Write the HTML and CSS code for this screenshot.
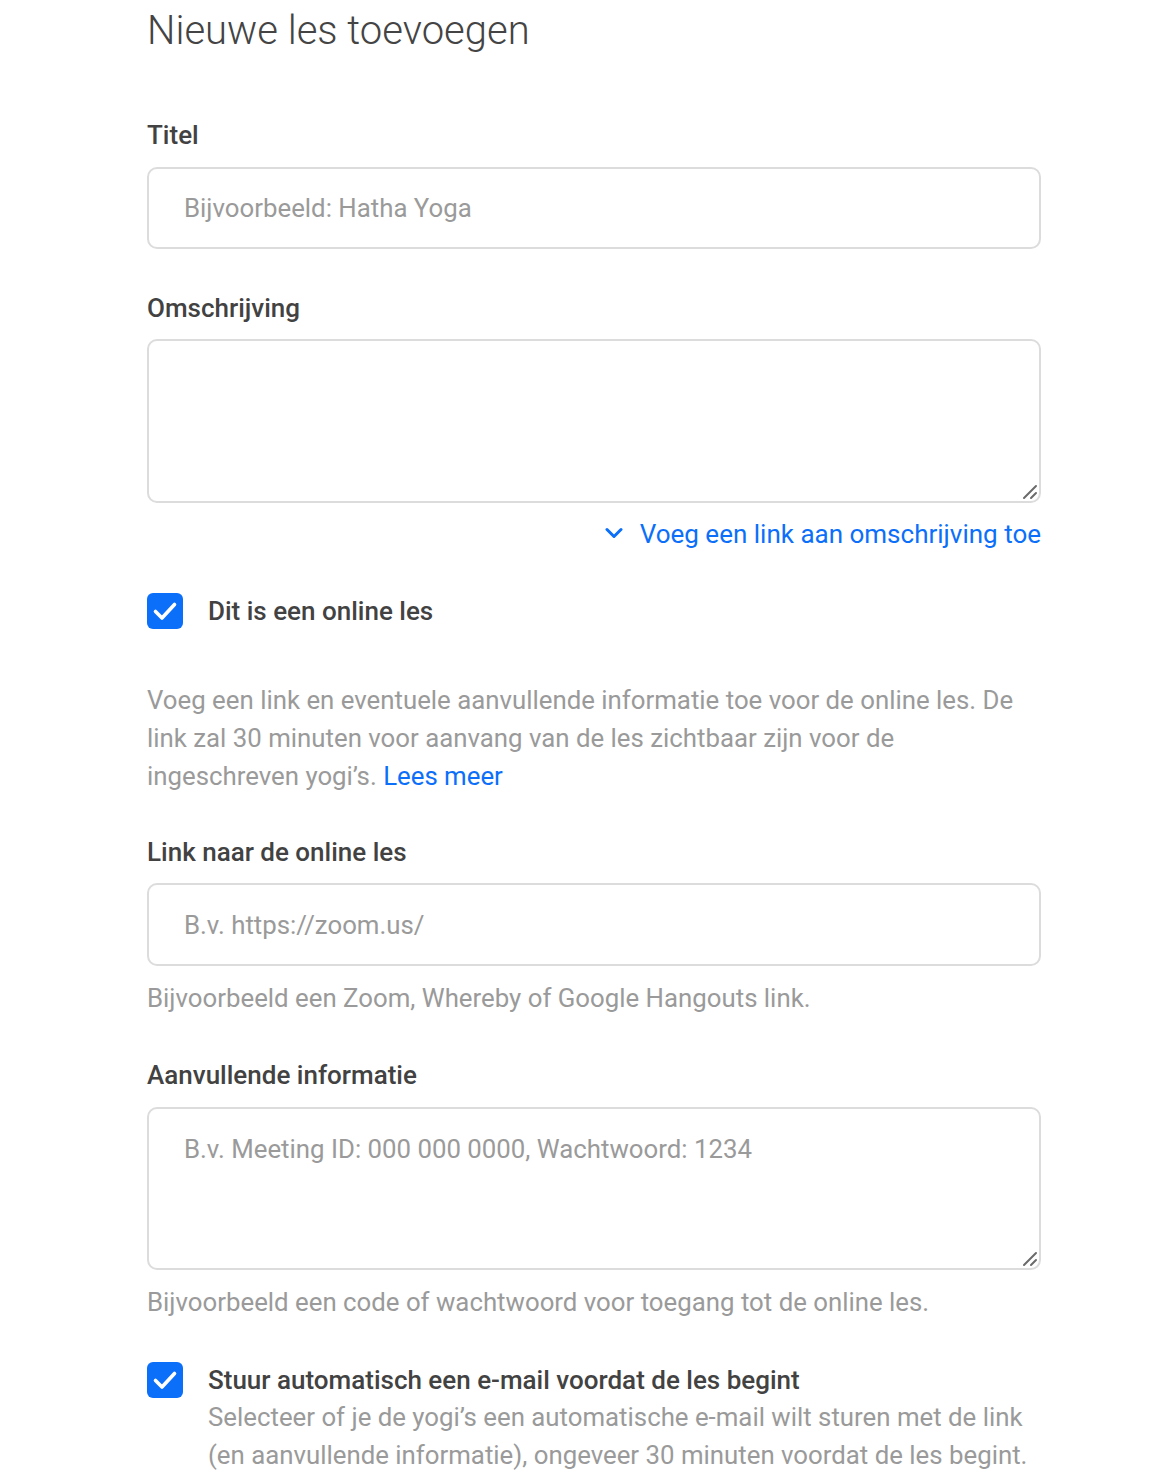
FILE: index.html
```html
<!DOCTYPE html>
<html lang="nl">
<head>
<meta charset="utf-8">
<title>Nieuwe les toevoegen</title>
<link rel="stylesheet" href="styles.css">
</head>
<body>
<main class="page">
  <h1 class="page-title">Nieuwe les toevoegen</h1>

  <div class="field field-first">
    <label class="field-label" for="titel">Titel</label>
    <input class="text-input" id="titel" type="text" placeholder="Bijvoorbeeld: Hatha Yoga">
  </div>

  <div class="field field-desc">
    <label class="field-label" for="omschrijving">Omschrijving</label>
    <div class="area-wrap">
      <textarea class="text-area" id="omschrijving"></textarea>
      <svg class="grip" width="16" height="16" viewBox="0 0 16 16" aria-hidden="true"><path d="M2 14 L14 2 M9 14 L14 9" fill="none" stroke="#6b6b6b" stroke-width="2" stroke-linecap="round"/></svg>
    </div>
    <div class="link-row">
      <a class="toggle-link" href="#">
        <svg class="chevron" width="18" height="12" viewBox="0 0 18 12" aria-hidden="true"><path d="M2 2.5 L9 9.5 L16 2.5" fill="none" stroke="currentColor" stroke-width="3" stroke-linecap="round" stroke-linejoin="round"/></svg>
        <span>Voeg een link aan omschrijving toe</span>
      </a>
    </div>
  </div>

  <div class="check-row check-online">
    <span class="checkbox"><svg width="36" height="36" viewBox="0 0 36 36" aria-hidden="true"><path d="M8.5 18.5 L15 25 L27.5 11.5" fill="none" stroke="#fff" stroke-width="3.6" stroke-linecap="round" stroke-linejoin="round"/></svg></span>
    <span class="check-label">Dit is een online les</span>
  </div>

  <p class="intro">Voeg een link en eventuele aanvullende informatie toe voor de online les. De link zal 30 minuten voor aanvang van de les zichtbaar zijn voor de ingeschreven yogi’s. <a class="blue-link" href="#">Lees meer</a></p>

  <div class="field field-link">
    <label class="field-label" for="link">Link naar de online les</label>
    <input class="text-input" id="link" type="text" placeholder="B.v. https://zoom.us/">
    <p class="help">Bijvoorbeeld een Zoom, Whereby of Google Hangouts link.</p>
  </div>

  <div class="field field-info">
    <label class="field-label" for="info">Aanvullende informatie</label>
    <div class="area-wrap">
      <textarea class="text-area" id="info" placeholder="B.v. Meeting ID: 000 000 0000, Wachtwoord: 1234"></textarea>
      <svg class="grip" width="16" height="16" viewBox="0 0 16 16" aria-hidden="true"><path d="M2 14 L14 2 M9 14 L14 9" fill="none" stroke="#6b6b6b" stroke-width="2" stroke-linecap="round"/></svg>
    </div>
    <p class="help help-info">Bijvoorbeeld een code of wachtwoord voor toegang tot de online les.</p>
  </div>

  <div class="check-row check-mail">
    <span class="checkbox"><svg width="36" height="36" viewBox="0 0 36 36" aria-hidden="true"><path d="M8.5 18.5 L15 25 L27.5 11.5" fill="none" stroke="#fff" stroke-width="3.6" stroke-linecap="round" stroke-linejoin="round"/></svg></span>
    <div class="check-text">
      <span class="check-label">Stuur automatisch een e-mail voordat de les begint</span>
      <span class="check-desc">Selecteer of je de yogi’s een automatische e-mail wilt sturen met de link (en aanvullende informatie), ongeveer 30 minuten voordat de les begint.</span>
    </div>
  </div>
</main>
</body>
</html>
```

FILE: styles.css
```css
* { box-sizing: border-box; }

html, body {
  margin: 0;
  padding: 0;
  background: #ffffff;
}

body {
  font-family: Roboto, "Liberation Sans", Arial, sans-serif;
  color: #444444;
}

.page {
  width: 894px;
  margin-left: 147px;
  padding-bottom: 40px;
}

.page-title {
  margin: 0;
  padding-top: 5px;
  font-size: 40px;
  font-weight: 300;
  line-height: 52px;
  color: #444444;
}

.field {
  display: flex;
  flex-direction: column;
  margin-top: 42px;
}

.field-first { margin-top: 62px; }
.field-desc { margin-top: 43px; }
.field-link { margin-top: 41px; }
.field-info { margin-top: 42px; }

.field-label {
  font-size: 26px;
  font-weight: 500;
  line-height: 32px;
  color: #424242;
  margin-bottom: 16px;
}

.field-desc .field-label { margin-bottom: 15px; }
.field-link .field-label { margin-bottom: 15px; }

.text-input,
.text-area {
  width: 100%;
  border: 2px solid #dcdcdc;
  border-radius: 10px;
  font-family: Roboto, "Liberation Sans", Arial, sans-serif;
  font-size: 25.8px;
  color: #444444;
  padding: 0 35px;
  background: #fff;
  outline: none;
}

.text-input {
  height: 82px;
}

.field-link .text-input { height: 83px; }

.area-wrap {
  position: relative;
}

.text-area {
  height: 164px;
  padding-top: 24px;
  line-height: 32px;
  resize: none;
  display: block;
}

.field-info .text-area { height: 163px; }

.grip {
  position: absolute;
  right: 3px;
  bottom: 3px;
  display: block;
  pointer-events: none;
}

.text-input::placeholder,
.text-area::placeholder {
  color: #9a9a9a;
  opacity: 1;
}

.link-row {
  display: flex;
  justify-content: flex-end;
  margin-top: 15px;
}

.toggle-link {
  display: flex;
  align-items: center;
  gap: 17px;
  font-size: 26px;
  line-height: 32px;
  color: #0b6ffa;
  text-decoration: none;
}

.chevron { display: block; margin-top: -2px; }

.check-row {
  display: flex;
  align-items: center;
  gap: 25px;
  margin-top: 43px;
}

.check-mail {
  align-items: flex-start;
  margin-top: 41px;
}

.checkbox {
  flex: none;
  width: 36px;
  height: 36px;
  border-radius: 6px;
  background: #0b6ffa;
  display: block;
}

.checkbox svg { display: block; }

.check-label {
  font-size: 26px;
  font-weight: 500;
  line-height: 36px;
  color: #424242;
}

.check-text {
  display: flex;
  flex-direction: column;
}

.check-desc {
  font-size: 25.8px;
  line-height: 38px;
  color: #9a9a9a;
}

.intro {
  margin: 52px 0 0;
  font-size: 25.8px;
  line-height: 38px;
  color: #9a9a9a;
}

.blue-link {
  color: #0b6ffa;
  text-decoration: none;
}

.help {
  margin: 13px 0 0;
  font-size: 25.8px;
  line-height: 38px;
  color: #9a9a9a;
}

.help-info { margin-top: 13px; }
```
